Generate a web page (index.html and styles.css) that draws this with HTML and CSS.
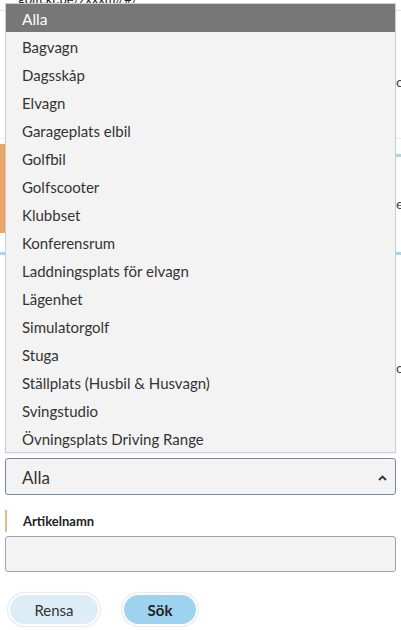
FILE: index.html
```html
<!DOCTYPE html>
<html lang="sv">
<head>
<meta charset="utf-8">
<link rel="stylesheet" href="styles.css">
</head>
<body>
<div class="page">
  <div class="crumb"><span>golfckr.be/zxxxm//#/</span></div>
  <div class="block1"><span class="edge-text orange">op</span></div>
  <div class="rule"></div>
  <div class="block2">
    <div class="accent"></div>
    <div class="edge-col">
      <div class="edge-line"></div>
      <span class="edge-text">el</span>
    </div>
  </div>
  <div class="blue-rule"></div>
  <div class="block3"><span class="edge-text">o</span></div>

  <form class="form">
    <div class="select">
      <span>Alla</span>
      <svg class="caret" width="9" height="6" viewBox="0 0 9 6"><path d="M1 5 L4.5 1.5 L8 5" fill="none" stroke="#333" stroke-width="1.8"/></svg>
    </div>
    <div class="label">Artikelnamn</div>
    <div class="input"></div>
    <div class="buttons">
      <button type="button" class="btn btn-light">Rensa</button>
      <button type="button" class="btn btn-primary">Sök</button>
    </div>
  </form>
</div>

<ul class="dropdown">
  <li class="selected">Alla</li>
  <li>Bagvagn</li>
  <li>Dagsskåp</li>
  <li>Elvagn</li>
  <li>Garageplats elbil</li>
  <li>Golfbil</li>
  <li>Golfscooter</li>
  <li>Klubbset</li>
  <li>Konferensrum</li>
  <li>Laddningsplats för elvagn</li>
  <li>Lägenhet</li>
  <li>Simulatorgolf</li>
  <li>Stuga</li>
  <li>Ställplats (Husbil &amp; Husvagn)</li>
  <li>Svingstudio</li>
  <li>Övningsplats Driving Range</li>
</ul>
</body>
</html>
```

FILE: styles.css
```css
* { box-sizing: border-box; }
html, body { margin: 0; padding: 0; }
body {
  width: 401px;
  height: 630px;
  overflow: hidden;
  background: #fff;
  font-family: Lato, "Liberation Sans", sans-serif;
  color: #333;
  position: relative;
}
.page { width: 401px; }

.crumb {
  height: 11px;
  overflow: hidden;
  border-bottom: 1px solid #e2e2e2;
  padding-left: 18px;
}
.crumb span {
  display: block;
  margin-top: -9px;
  font-size: 13px;
  line-height: 16px;
  color: #222;
  white-space: nowrap;
}
.block1 {
  height: 127px;
  padding-top: 62px;
}
.edge-text {
  display: block;
  padding-left: 396px;
  white-space: nowrap;
  font-size: 14px;
  line-height: 18px;
  color: #444;
}
.rule { height: 1px; background: #ececec; }
.block2 {
  height: 113px;
  display: flex;
  justify-content: space-between;
}
.accent {
  width: 5px;
  height: 89px;
  margin-top: 5px;
  background: #eca66a;
}
.edge-col { width: 6px; }
.edge-line {
  height: 3px;
  margin-top: 15px;
  background: #a9d5ee;
}
.block2 .edge-text { padding-left: 1px; margin-top: 38px; }
.blue-rule { height: 3px; background: #a9d5ee; }
.block3 {
  height: 203px;
  padding-top: 104px;
}

.form {
  margin: 0;
  padding: 0 5px;
}
.select {
  height: 37px;
  border: 1px solid #7189a8;
  border-radius: 3px;
  background: #f3f3f3;
  display: flex;
  align-items: center;
  justify-content: space-between;
  padding: 1px 8px 0 16px;
  font-size: 17px;
}
.caret { margin-top: 1px; }
.label {
  margin-top: 15px;
  height: 22px;
  line-height: 22px;
  border-left: 2px solid #e7b68c;
  padding-left: 16px;
  font-size: 13px;
  font-weight: 700;
  color: #222;
}
.input {
  margin-top: 4px;
  height: 36px;
  border: 1px solid #a3a3a3;
  border-radius: 3px;
  background: #f3f3f3;
}
.buttons {
  margin-top: 21px;
  padding-left: 3px;
  display: flex;
  gap: 22px;
}
.btn {
  height: 33px;
  border: 2px solid #fff;
  border-radius: 17px;
  box-shadow: 0 0 2px rgba(0, 0, 0, 0.3);
  font-family: Lato, "Liberation Sans", sans-serif;
  font-size: 15px;
  color: #333;
  padding: 0;
}
.btn-light { width: 92px; background: #ddedf8; }
.btn-primary { width: 76px; background: #9dd3ef; font-weight: 700; color: #222; }

.dropdown {
  position: absolute;
  left: 5px;
  top: 3px;
  width: 391px;
  margin: 0;
  padding: 0;
  list-style: none;
  background: #f3f3f3;
  border: 1px solid #cfcfcf;
  box-shadow: 0 1px 2px rgba(0, 0, 0, 0.08);
}
.dropdown li {
  height: 28px;
  line-height: 28px;
  padding: 1px 0 0 16px;
  font-size: 15px;
  color: #333;
  white-space: nowrap;
}
.dropdown li.selected {
  background: #777;
  color: #fff;
  font-size: 15.5px;
}
```
